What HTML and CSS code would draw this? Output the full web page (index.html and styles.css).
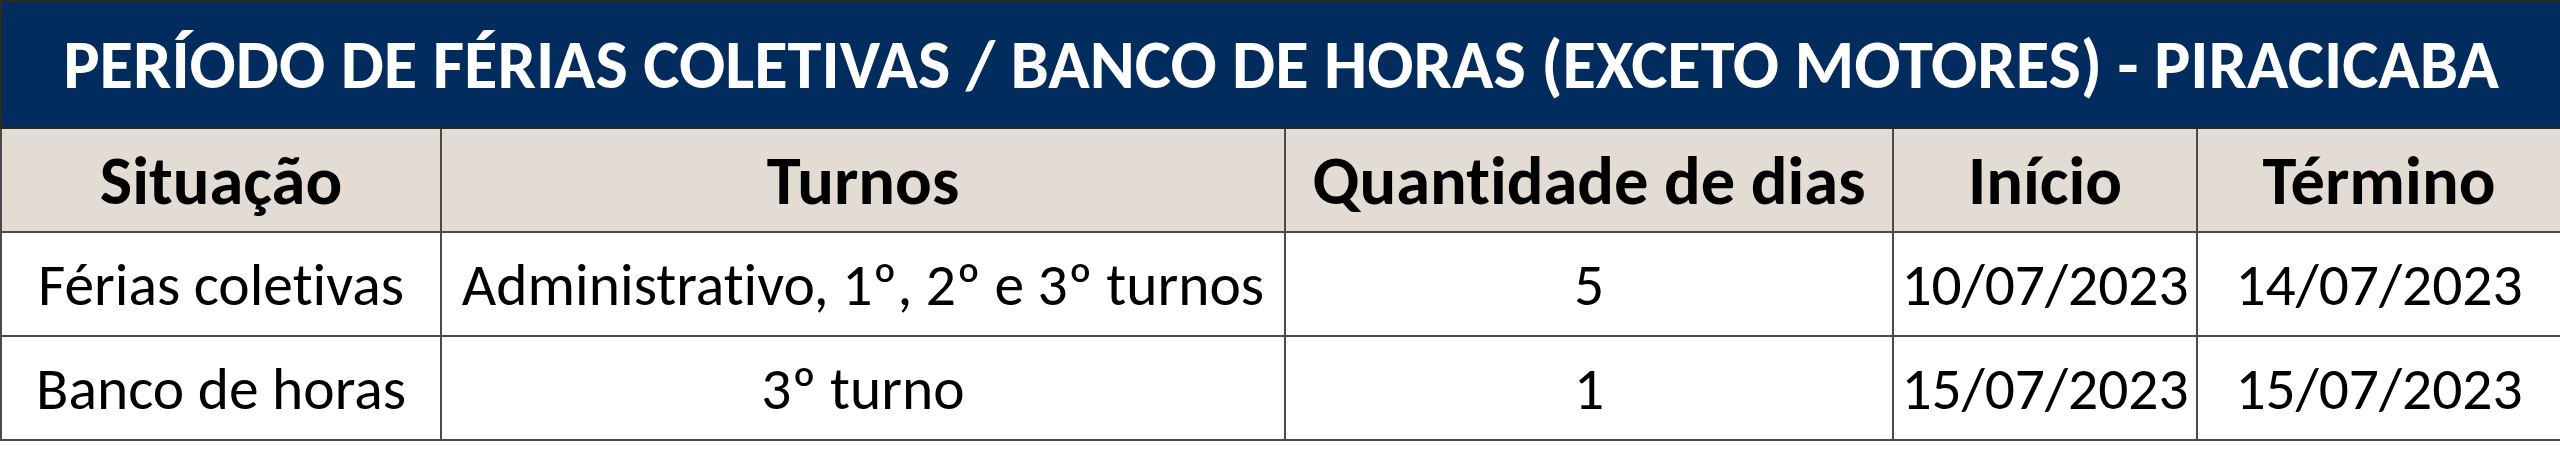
FILE: index.html
```html
<!DOCTYPE html>
<html lang="pt-BR">
<head>
<meta charset="utf-8">
<title>Período de férias coletivas</title>
<link rel="stylesheet" href="styles.css">
</head>
<body>
<table class="schedule">
  <colgroup>
    <col class="c-sit">
    <col class="c-turn">
    <col class="c-qty">
    <col class="c-ini">
    <col class="c-end">
  </colgroup>
  <thead>
    <tr class="title-row">
      <th colspan="5" class="title">PERÍODO DE FÉRIAS COLETIVAS / BANCO DE HORAS (EXCETO MOTORES) - PIRACICABA</th>
    </tr>
    <tr class="head-row">
      <th>Situação</th>
      <th>Turnos</th>
      <th>Quantidade de dias</th>
      <th>Início</th>
      <th>Término</th>
    </tr>
  </thead>
  <tbody>
    <tr class="body-row">
      <td>Férias coletivas</td>
      <td>Administrativo, 1º, 2º e 3º turnos</td>
      <td>5</td>
      <td>10/07/2023</td>
      <td>14/07/2023</td>
    </tr>
    <tr class="body-row">
      <td>Banco de horas</td>
      <td>3º turno</td>
      <td>1</td>
      <td>15/07/2023</td>
      <td>15/07/2023</td>
    </tr>
  </tbody>
</table>
</body>
</html>
```

FILE: styles.css
```css
html, body {
  margin: 0;
  padding: 0;
  background: #ffffff;
}

body {
  font-family: "Carlito", "Lato", "Liberation Sans", sans-serif;
  font-variant-ligatures: none;
  font-feature-settings: "liga" 0, "clig" 0;
  color: #000000;
}

.schedule {
  width: 2560px;
  border-collapse: collapse;
  table-layout: fixed;
}

.c-sit { width: 440px; }
.c-turn { width: 844px; }
.c-qty { width: 608px; }
.c-ini { width: 304px; }
.c-end { width: 364px; }

.schedule th,
.schedule td {
  border: 2px solid #4a4a4a;
  padding: 0;
  text-align: center;
  white-space: nowrap;
  overflow: hidden;
}

.title-row .title {
  height: 125px;
  background: #022c5e;
  color: #ffffff;
  font-weight: 700;
  font-size: 68.4px;
  border-color: #2a2a2a;
}

.head-row th {
  height: 102px;
  background: #e3dcd4;
  font-weight: 700;
  font-size: 68.5px;
}

.body-row td {
  height: 102px;
  font-size: 59.5px;
  font-weight: 400;
}
```
